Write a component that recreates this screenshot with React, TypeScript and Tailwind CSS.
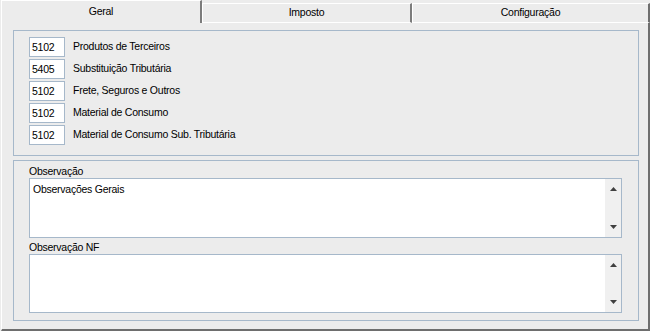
import React from 'react';

const codes = [
  { code: '5102', label: 'Produtos de Terceiros' },
  { code: '5405', label: 'Substituição Tributária' },
  { code: '5102', label: 'Frete, Seguros e Outros' },
  { code: '5102', label: 'Material de Consumo' },
  { code: '5102', label: 'Material de Consumo Sub. Tributária' },
];

function ScrollArea({ text, height }: { text?: string; height: string }) {
  return (
    <div className={`flex w-[593px] ${height} border border-[#a6b8ca] bg-white`}>
      <div className="flex-1 px-[3px] pt-[3px] leading-[14px]">{text}</div>
      <div className="flex w-[16px] flex-col items-center justify-between bg-[#f0f0f0] py-[8px]">
        <svg width="7" height="4" viewBox="0 0 7 4">
          <path d="M0 4 L3.5 0 L7 4 Z" fill="#404040" />
        </svg>
        <svg width="7" height="4" viewBox="0 0 7 4">
          <path d="M0 0 L3.5 4 L7 0 Z" fill="#404040" />
        </svg>
      </div>
    </div>
  );
}

export default function App() {
  return (
    <div
      className="flex h-[331px] w-[650px] flex-col bg-[#ececec] pl-[1px] text-[10.5px] tracking-[-0.25px] text-black"
      style={{ fontFamily: '"Liberation Sans", Arial, sans-serif' }}
    >
      {/* Tabs */}
      <div className="flex h-[23px] items-end">
        <div className="flex h-[23px] w-[201px] items-center justify-center border-l border-t border-white border-r-2 border-r-[#7c7c7c] pb-[1px]">
          Geral
        </div>
        <div className="flex h-[20px] w-[210px] items-center justify-center border-b border-l border-t border-white border-r-2 border-r-[#7c7c7c]">
          Imposto
        </div>
        <div className="flex h-[20px] flex-1 items-center justify-center border-b border-l border-t border-white border-r-2 border-r-[#6e6e6e]">
          Configuração
        </div>
      </div>

      {/* Panel */}
      <div className="flex flex-1 flex-col border-l border-white border-r-2 border-r-[#6e6e6e] border-b-2 border-b-[#6e6e6e] pl-[11px] pt-[7px]">
        <div className="flex h-[126px] w-[626px] flex-col gap-[2px] border border-[#a6b8ca] pl-[15px] pt-[6px]">
          {codes.map((c, i) => (
            <div key={i} className="flex h-[20px] items-center gap-[8px]">
              <div className="flex h-[20px] w-[36px] items-center border border-[#a6b8ca] bg-white pl-[2px] leading-none">
                {c.code}
              </div>
              <span>{c.label}</span>
            </div>
          ))}
        </div>

        <div className="mt-[4px] flex h-[161px] w-[626px] flex-col border border-[#a6b8ca] pl-[15px]">
          <div className="mt-[3px] h-[14px] leading-[14px]">Observação</div>
          <ScrollArea text="Observações Gerais" height="h-[60px]" />
          <div className="mt-[2px] h-[14px] leading-[14px]">Observação NF</div>
          <ScrollArea height="h-[59px]" />
        </div>
      </div>
    </div>
  );
}
